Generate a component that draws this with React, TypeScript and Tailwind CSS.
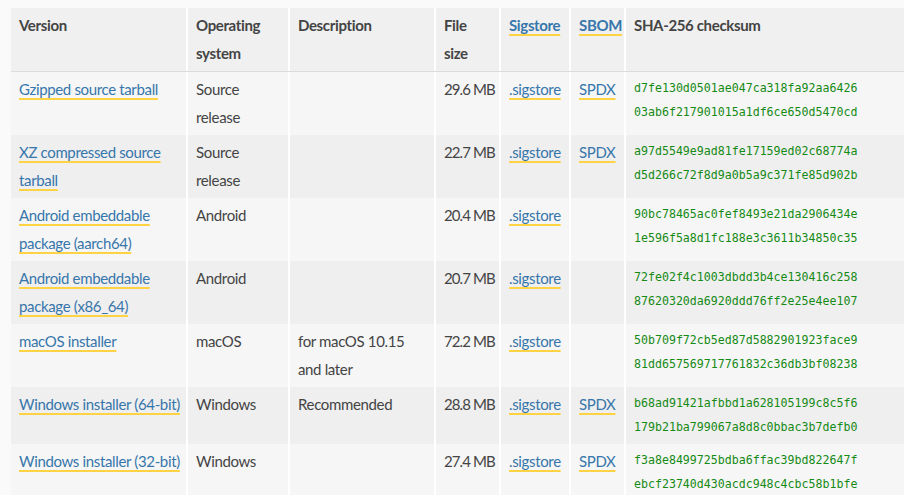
type FileRow = {
  version: string[];
  os: string[];
  desc: string[];
  size: string;
  sbom: boolean;
  sha: string[];
};

const files: FileRow[] = [
  {
    version: ["Gzipped source tarball"],
    os: ["Source", "release"],
    desc: [],
    size: "29.6 MB",
    sbom: true,
    sha: ["d7fe130d0501ae047ca318fa92aa6426", "03ab6f217901015a1df6ce650d5470cd"],
  },
  {
    version: ["XZ compressed source", "tarball"],
    os: ["Source", "release"],
    desc: [],
    size: "22.7 MB",
    sbom: true,
    sha: ["a97d5549e9ad81fe17159ed02c68774a", "d5d266c72f8d9a0b5a9c371fe85d902b"],
  },
  {
    version: ["Android embeddable", "package (aarch64)"],
    os: ["Android"],
    desc: [],
    size: "20.4 MB",
    sbom: false,
    sha: ["90bc78465ac0fef8493e21da2906434e", "1e596f5a8d1fc188e3c3611b34850c35"],
  },
  {
    version: ["Android embeddable", "package (x86_64)"],
    os: ["Android"],
    desc: [],
    size: "20.7 MB",
    sbom: false,
    sha: ["72fe02f4c1003dbdd3b4ce130416c258", "87620320da6920ddd76ff2e25e4ee107"],
  },
  {
    version: ["macOS installer"],
    os: ["macOS"],
    desc: ["for macOS 10.15", "and later"],
    size: "72.2 MB",
    sbom: false,
    sha: ["50b709f72cb5ed87d5882901923face9", "81dd657569717761832c36db3bf08238"],
  },
  {
    version: ["Windows installer (64-bit)"],
    os: ["Windows"],
    desc: ["Recommended"],
    size: "28.8 MB",
    sbom: true,
    sha: ["b68ad91421afbbd1a628105199c8c5f6", "179b21ba799067a8d8c0bbac3b7defb0"],
  },
  {
    version: ["Windows installer (32-bit)"],
    os: ["Windows"],
    desc: [],
    size: "27.4 MB",
    sbom: true,
    sha: ["f3a8e8499725bdba6ffac39bd822647f", "ebcf23740d430acdc948c4cbc58b1bfe"],
  },
];

const grid = "grid grid-cols-[175px_102px_146px_65px_70px_55px_1fr]";
const cell = "px-2 pt-[3px] pb-1 leading-[28px] whitespace-nowrap";
const sep = "border-l-2 border-white";

function Lines({ lines }: { lines: string[] }) {
  return (
    <>
      {lines.map((l, i) => (
        <span key={i} className="block">
          {l}
        </span>
      ))}
    </>
  );
}

function Link({ lines }: { lines: string[] }) {
  return (
    <>
      {lines.map((l, i) => (
        <span key={i} className="block">
          <a className="text-[#3776ab] underline decoration-[#ffd343] decoration-[1.5px] underline-offset-[3px] [text-decoration-skip-ink:none]">
            {l}
          </a>
        </span>
      ))}
    </>
  );
}

export default function App() {
  return (
    <div className="h-[495px] w-[904px] overflow-hidden bg-[#fafafa] pt-2 pl-[11px] font-['Lato',sans-serif] text-[15px] tracking-[-0.35px] text-[#444]">
      <div className="w-[1000px]">
        {/* Header */}
        <div className={`${grid} bg-[#f0f0f0] border-b border-[#dcdcdc] font-bold`}>
          <div className={cell}>Version</div>
          <div className={`${cell} ${sep}`}>
            <Lines lines={["Operating", "system"]} />
          </div>
          <div className={`${cell} ${sep}`}>Description</div>
          <div className={`${cell} ${sep}`}>
            <Lines lines={["File", "size"]} />
          </div>
          <div className={`${cell} ${sep}`}>
            <Link lines={["Sigstore"]} />
          </div>
          <div className={`${cell} ${sep}`}>
            <Link lines={["SBOM"]} />
          </div>
          <div className={`${cell} ${sep}`}>SHA-256 checksum</div>
        </div>

        {/* Rows */}
        {files.map((f, i) => (
          <div key={i} className={`${grid} ${i % 2 === 0 ? "bg-[#f6f6f6]" : "bg-[#efefef]"}`}>
            <div className={cell}>
              <Link lines={f.version} />
            </div>
            <div className={`${cell} ${sep}`}>
              <Lines lines={f.os} />
            </div>
            <div className={`${cell} ${sep}`}>
              <Lines lines={f.desc} />
            </div>
            <div className={`${cell} ${sep} tracking-[-0.9px]`}>{f.size}</div>
            <div className={`${cell} ${sep}`}>
              <Link lines={[".sigstore"]} />
            </div>
            <div className={`${cell} ${sep}`}>{f.sbom && <Link lines={["SPDX"]} />}</div>
            <div className={`${sep} px-2 pt-1 pb-[5px] leading-[24px] tracking-normal font-['DejaVu_Sans_Mono',monospace] text-[11.6px] text-[#158a15]`}>
              <Lines lines={f.sha} />
            </div>
          </div>
        ))}
      </div>
    </div>
  );
}
